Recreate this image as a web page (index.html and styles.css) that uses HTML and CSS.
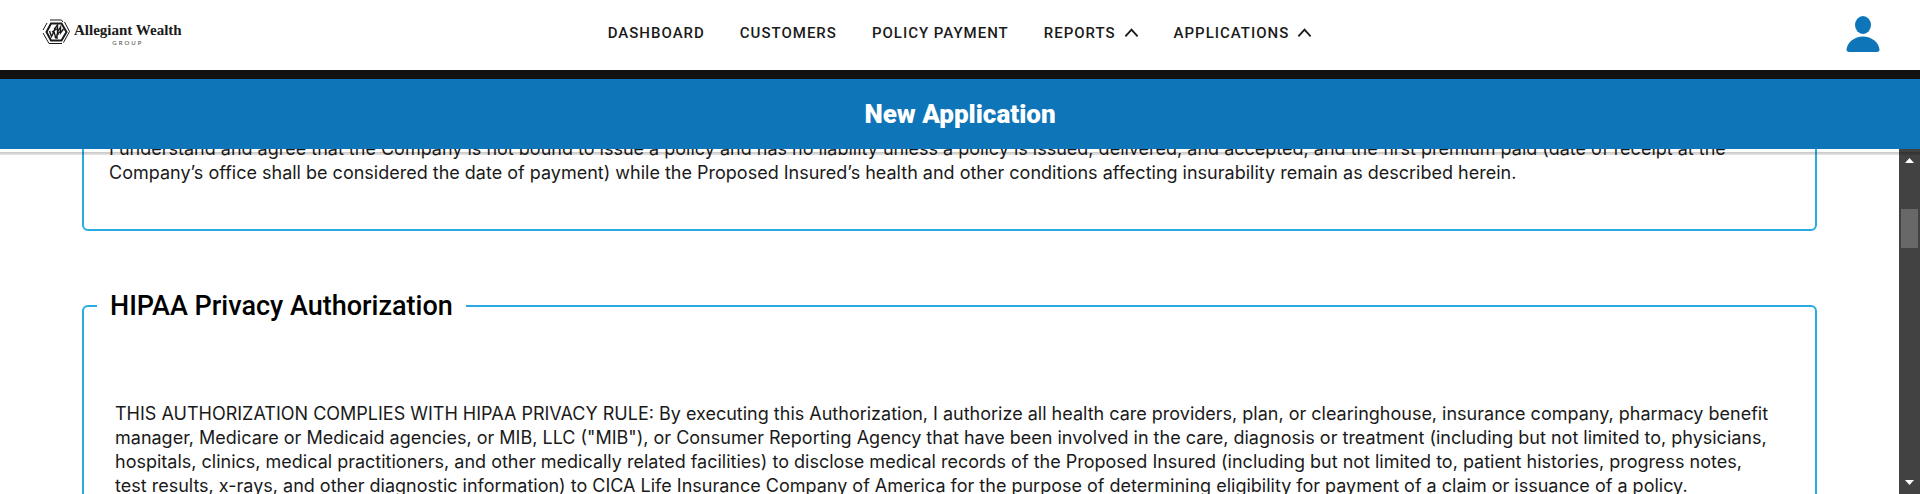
FILE: index.html
```
<!DOCTYPE html>
<html lang="en">
<head>
<meta charset="utf-8">
<title>New Application</title>
<link rel="stylesheet" href="styles.css">
</head>
<body>
<header class="topbar">
  <a class="logo" href="#" aria-label="Allegiant Wealth Group">
    <svg class="logo-mark" viewBox="0 0 28 26" fill="none" stroke="#1a1a1a" aria-hidden="true">
      <path d="M8 1h11.500l1.500 2M5 4L1 11M1 14l6 10.500h13M22.500 3l5 9.500-6 11" stroke-width="1"/>
      <path d="M9 4.500h10.500l5 8.500-5 8.500H9L4.500 13z" stroke-width="2"/>
      <path d="M12 10.500l3.500-4.500v7l3-5v6l3-4M7.500 12l2 5.500 2.500-5 1.500 6 3-4M10 13l6-4M15 20v-5l4-3" stroke-width="1.400"/>
    </svg>
    <span class="logo-text"><span class="logo-name">Allegiant Wealth</span><span class="logo-sub">GROUP</span></span>
  </a>
  <nav class="nav" aria-label="Main">
    <a class="nav-link" href="#">DASHBOARD</a>
    <a class="nav-link" href="#">CUSTOMERS</a>
    <a class="nav-link" href="#">POLICY PAYMENT</a>
    <button class="nav-link" type="button">REPORTS <svg class="caret" viewBox="0 0 16 10" aria-hidden="true"><path d="M1.500 8.500L8 1.500l6.500 7"/></svg></button>
    <button class="nav-link" type="button">APPLICATIONS <svg class="caret" viewBox="0 0 16 10" aria-hidden="true"><path d="M1.500 8.500L8 1.500l6.500 7"/></svg></button>
  </nav>
  <button class="account" type="button" aria-label="Account">
    <svg class="account-icon" viewBox="0 0 34 36" aria-hidden="true"><ellipse cx="17" cy="9" rx="8" ry="9"/><path d="M3 36C1.500 36 .5 35 .5 33.500 1.500 26 8.500 20.500 17 20.500S32.500 26 33.500 33.500C33.500 35 32.500 36 31 36z"/></svg>
  </button>
</header>
<div class="banner"><h1 class="banner-title">New Application</h1></div>
<div class="viewport">
  <main class="content">
    <section class="card card-scrolled">
      <p class="copy">I understand and agree that the Company is not bound to issue a policy and has no liability unless a policy is issued, delivered, and accepted, and the first premium paid (date of receipt at the<br>Company’s office shall be considered the date of payment) while the Proposed Insured’s health and other conditions affecting insurability remain as described herein.</p>
    </section>
    <fieldset class="card card-titled">
      <legend class="card-title">HIPAA Privacy Authorization</legend>
      <p class="copy">THIS AUTHORIZATION COMPLIES WITH HIPAA PRIVACY RULE: By executing this Authorization, I authorize all health care providers, plan, or clearinghouse, insurance company, pharmacy benefit<br>manager, Medicare or Medicaid agencies, or MIB, LLC ("MIB"), or Consumer Reporting Agency that have been involved in the care, diagnosis or treatment (including but not limited to, physicians,<br>hospitals, clinics, medical practitioners, and other medically related facilities) to disclose medical records of the Proposed Insured (including but not limited to, patient histories, progress notes,<br>test results, x-rays, and other diagnostic information) to CICA Life Insurance Company of America for the purpose of determining eligibility for payment of a claim or issuance of a policy.</p>
    </fieldset>
  </main>
  <div class="scrollbar" aria-hidden="true">
    <svg class="arrow" viewBox="0 0 9 5"><path d="M0 5L4.500 0 9 5z"/></svg>
    <div class="track"><div class="thumb"></div></div>
    <svg class="arrow" viewBox="0 0 9 5"><path d="M0 0L4.500 5 9 0z"/></svg>
  </div>
</div>
</body>
</html>
```
FILE: styles.css
```
* { box-sizing: border-box; }
body {
  margin: 0;
  height: 100vh;
  display: flex;
  flex-direction: column;
  overflow: hidden;
  background: #fff;
  color: #1a1a1a;
  font-family: Roboto, "Liberation Sans", sans-serif;
}
button { font: inherit; color: inherit; background: none; border: 0; padding: 0; }
.topbar {
  display: grid;
  grid-template-columns: 1fr auto 1fr;
  align-items: center;
  min-height: 79px;
  padding: 0 40px;
  border-bottom: 9px solid #111;
  flex: none;
}
.logo { display: flex; align-items: center; gap: 4px; padding: 0 0 6px 2px; color: #1a1a1a; text-decoration: none; }
.logo-mark { width: 28px; height: 26px; }
.logo-text { display: flex; flex-direction: column; align-items: center; font-family: "Liberation Serif", serif; padding-top: 6px; }
.logo-name { font-size: 15px; line-height: 16px; font-weight: 700; }
.logo-sub { font-family: Lato, sans-serif; font-size: 6px; line-height: 10px; letter-spacing: 2px; color: #444; }
.nav { display: flex; gap: 35px; padding-bottom: 4px; }
.nav-link {
  display: flex;
  align-items: center;
  gap: 8px;
  font-size: 15px;
  line-height: 20px;
  font-weight: 500;
  letter-spacing: 1px;
  color: #1a1a1a;
  text-decoration: none;
}
.caret { width: 15px; height: 10px; fill: none; stroke: #1a1a1a; stroke-width: 2; }
.account { justify-self: end; padding-bottom: 2px; }
.account-icon { display: block; width: 34px; height: 36px; fill: #0d75b8; }
.banner {
  position: relative;
  z-index: 1;
  flex: none;
  min-height: 70px;
  display: flex;
  align-items: center;
  justify-content: center;
  background: #0d75b8;
}
.banner::after {
  content: "";
  position: absolute;
  left: 0;
  right: 0;
  top: calc(100% + 3px);
  height: 3px;
  background: linear-gradient(rgba(0, 0, 0, .22), rgba(0, 0, 0, .1));
}
.banner-title { margin: 0; font-size: 26px; line-height: 32px; font-weight: 900; color: #fff; }
.viewport { flex: 1; min-height: 0; display: flex; }
.content { flex: 1; min-width: 0; padding: 0 82px; overflow: hidden; }
.card { min-width: 0; margin: 0; border: 2px solid #29abe2; border-radius: 6px; }
.card-scrolled { margin-top: -14px; padding: 0 25px 44px; }
.card-titled { margin-top: 57px; padding: 78px 20px 24px 31px; }
.card-title { margin-left: -18px; padding: 0 13px; font-size: 27px; line-height: 36px; font-weight: 500; color: #000; }
.copy { margin: 0; font-family: Inter, Roboto, sans-serif; font-size: 18px; line-height: 24px; }
.scrollbar { flex: none; width: 21px; display: flex; flex-direction: column; align-items: center; padding: 9px 0; background: #424242; }
.arrow { width: 9px; height: 5px; fill: #fff; }
.track { flex: 1; width: 100%; padding: 46px 2px 0; }
.thumb { height: 39px; background: #686868; }
```
